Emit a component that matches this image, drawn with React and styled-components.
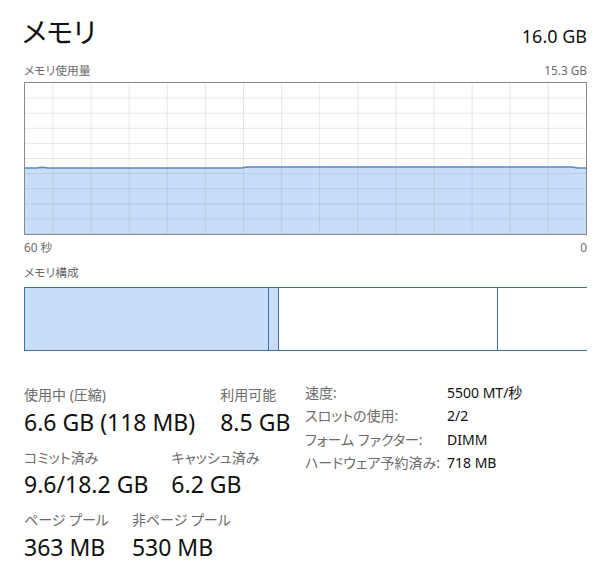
import React from "react";
import styled, { createGlobalStyle } from "styled-components";

const Global = createGlobalStyle`
  html, body { margin: 0; padding: 0; background: #ffffff; }
  body {
    font-family: "Segoe UI", "Noto Sans", "Noto Sans CJK JP", sans-serif;
    font-feature-settings: "palt";
    color: #1b1b1b;
  }
`;

const Page = styled.div`
  width: 600px;
  height: 570px;
  box-sizing: border-box;
  padding: 10px 13px 0 24px;
  display: flex;
  flex-direction: column;
  overflow: hidden;
`;

const TitleRow = styled.div`
  display: flex;
  justify-content: space-between;
  align-items: baseline;
  height: 46px;
`;

const Title = styled.h1`
  margin: 0 0 0 -2px;
  font-size: 28px;
  font-weight: 400;
  line-height: 44px;
  color: #111;
`;

const Total = styled.div`
  font-size: 18px;
  line-height: 24px;
  color: #111;
`;

const CaptionRow = styled.div`
  display: flex;
  justify-content: space-between;
  font-size: 11.8px;
  line-height: 16px;
  color: #6b6b6b;
  margin-top: ${(p) => p.$top || 0}px;
`;

const GraphBox = styled.div`
  width: 561px;
  height: 151px;
  border: 1px solid #8a8a8a;
  margin-top: 4px;
  background: #fff;
`;

const Composition = styled.div`
  display: flex;
  width: 561px;
  height: 62px;
  border: 1px solid #3f70ad;
  margin-top: 7px;
`;

const Segment = styled.div`
  flex: 0 0 ${(p) => p.$w}px;
  background: ${(p) => (p.$filled ? "#c7ddf8" : "#ffffff")};
  border-left: ${(p) => (p.$first ? "none" : "1px solid #3f70ad")};
`;

const Stats = styled.div`
  display: flex;
  align-items: flex-start;
  margin-top: 35px;
`;

const LeftStats = styled.div`
  width: 281px;
  display: flex;
  flex-direction: column;
  gap: 13px;
`;

const StatRow = styled.div`
  display: flex;
  gap: ${(p) => p.$gap}px;
`;

const Stat = styled.div`
  display: flex;
  flex-direction: column;
`;

const StatLabel = styled.div`
  font-size: 14px;
  line-height: 18px;
  color: #6b6b6b;
  white-space: nowrap;
`;

const StatValue = styled.div`
  font-size: 23px;
  line-height: 28px;
  margin-top: 3.5px;
  color: #111;
  white-space: nowrap;
`;

const Details = styled.div`
  display: grid;
  grid-template-columns: 142px auto;
  font-size: 14px;
  line-height: 23.3px;
  margin-top: -5px;
  white-space: nowrap;
`;

const DetailLabel = styled.div`
  color: #6b6b6b;
`;

const DetailValue = styled.div`
  color: #111;
`;

function MemoryGraph() {
  const W = 561;
  const H = 151;
  const vx = [];
  for (let x = 28; x < W; x += 38.1) vx.push(x);
  const hy = [];
  for (let y = 15.1; y < H; y += 15.1) hy.push(y);
  const line =
    "M0,85 L12,85 L17,84.3 L23,85 L216,85 L222,84 L547,84 L553,85 L561,85";
  return (
    <svg width={W} height={H} viewBox={`0 0 ${W} ${H}`} style={{ display: "block" }}>
      <path d={`${line} L561,151 L0,151 Z`} fill="#c7ddf8" />
      {vx.map((x) => (
        <line key={"v" + x} x1={x} y1={0} x2={x} y2={H} stroke="#7c8a9c" strokeOpacity="0.2" strokeWidth="1" />
      ))}
      {hy.map((y) => (
        <line key={"h" + y} x1={0} y1={y} x2={W} y2={y} stroke="#7c8a9c" strokeOpacity="0.2" strokeWidth="1" />
      ))}
      <path d={line} fill="none" stroke="#5d86b8" strokeWidth="1.5" />
    </svg>
  );
}

const details = [
  ["速度:", "5500 MT/秒"],
  ["スロットの使用:", "2/2"],
  ["フォーム ファクター:", "DIMM"],
  ["ハードウェア予約済み:", "718 MB"],
];

export default function App() {
  return (
    <>
      <Global />
      <Page>
        <TitleRow>
          <Title>メモリ</Title>
          <Total>16.0 GB</Total>
        </TitleRow>
        <CaptionRow $top={6}>
          <span>メモリ使用量</span>
          <span>15.3 GB</span>
        </CaptionRow>
        <GraphBox>
          <MemoryGraph />
        </GraphBox>
        <CaptionRow $top={4}>
          <span>60 秒</span>
          <span>0</span>
        </CaptionRow>
        <CaptionRow $top={9}>
          <span>メモリ構成</span>
        </CaptionRow>
        <Composition>
          <Segment $first $filled $w={243} />
          <Segment $filled $w={9} />
          <Segment $w={218} />
          <Segment $w={91} />
        </Composition>
        <Stats>
          <LeftStats>
            <StatRow $gap={25}>
              <Stat>
                <StatLabel>使用中 (圧縮)</StatLabel>
                <StatValue>6.6 GB (118 MB)</StatValue>
              </Stat>
              <Stat>
                <StatLabel>利用可能</StatLabel>
                <StatValue>8.5 GB</StatValue>
              </Stat>
            </StatRow>
            <StatRow $gap={23}>
              <Stat>
                <StatLabel>コミット済み</StatLabel>
                <StatValue>9.6/18.2 GB</StatValue>
              </Stat>
              <Stat>
                <StatLabel>キャッシュ済み</StatLabel>
                <StatValue>6.2 GB</StatValue>
              </Stat>
            </StatRow>
            <StatRow $gap={23}>
              <Stat>
                <StatLabel>ページ プール</StatLabel>
                <StatValue>363 MB</StatValue>
              </Stat>
              <Stat>
                <StatLabel>非ページ プール</StatLabel>
                <StatValue>530 MB</StatValue>
              </Stat>
            </StatRow>
          </LeftStats>
          <Details>
            {details.map(([k, v]) => (
              <React.Fragment key={k}>
                <DetailLabel>{k}</DetailLabel>
                <DetailValue>{v}</DetailValue>
              </React.Fragment>
            ))}
          </Details>
        </Stats>
      </Page>
    </>
  );
}
